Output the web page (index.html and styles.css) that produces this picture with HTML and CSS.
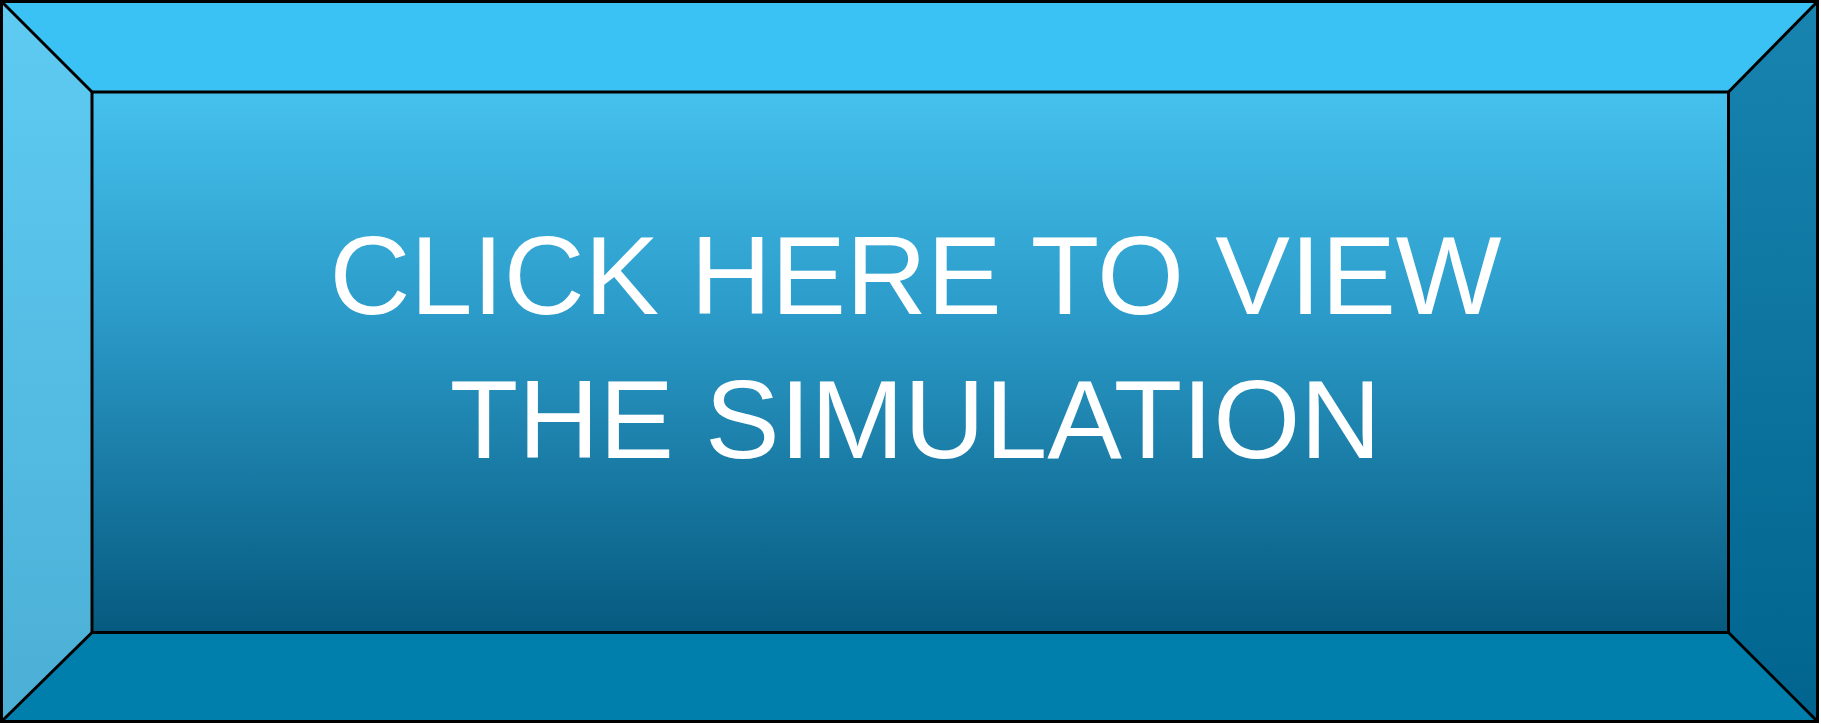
FILE: index.html
```html
<!DOCTYPE html>
<html lang="en">
<head>
<meta charset="utf-8">
<title>Click here to view the simulation</title>
<link rel="stylesheet" href="styles.css">
</head>
<body>
<div class="button">
  <svg class="bevel" width="1821" height="725" viewBox="0 0 1821 725" xmlns="http://www.w3.org/2000/svg">
    <defs>
      <linearGradient id="face" x1="0" y1="0" x2="0" y2="1">
        <stop offset="0" stop-color="#46C1ED"/>
        <stop offset="0.4" stop-color="#2C9CCA"/>
        <stop offset="1" stop-color="#065A7F"/>
      </linearGradient>
      <linearGradient id="left" x1="0" y1="0" x2="0" y2="1">
        <stop offset="0" stop-color="#5ECBF3"/>
        <stop offset="1" stop-color="#4CAFD5"/>
      </linearGradient>
      <linearGradient id="right" x1="0" y1="0" x2="0" y2="1">
        <stop offset="0" stop-color="#1884B0"/>
        <stop offset="1" stop-color="#00648E"/>
      </linearGradient>
    </defs>
    <polygon points="1.5,1.5 1817.5,1.5 1728.5,92 92,92" fill="#39C2F3"/>
    <polygon points="1.5,1.5 92,92 92,632.5 1.5,721.5" fill="url(#left)"/>
    <polygon points="1817.5,1.5 1817.5,721.5 1728.5,632.5 1728.5,92" fill="url(#right)"/>
    <polygon points="1.5,721.5 92,632.5 1728.5,632.5 1817.5,721.5" fill="#007FAD"/>
    <rect x="92" y="92" width="1636.5" height="540.5" fill="url(#face)"/>
    <g fill="none" stroke="#000" stroke-width="3">
      <rect x="1.5" y="1.5" width="1816" height="720"/>
      <rect x="92" y="92" width="1636.5" height="540.5"/>
      <line x1="1.5" y1="1.5" x2="92" y2="92"/>
      <line x1="1817.5" y1="1.5" x2="1728.5" y2="92"/>
      <line x1="1.5" y1="721.5" x2="92" y2="632.5"/>
      <line x1="1817.5" y1="721.5" x2="1728.5" y2="632.5"/>
    </g>
  </svg>
  <div class="label">
    <div class="line">CLICK HERE TO VIEW</div>
    <div class="line">THE SIMULATION</div>
  </div>
</div>
</body>
</html>
```
FILE: styles.css
```css
html, body {
  margin: 0;
  padding: 0;
  background: #ffffff;
}

.button {
  position: relative;
  width: 1821px;
  height: 725px;
  overflow: hidden;
}

.bevel {
  position: absolute;
  left: 0;
  top: 0;
  display: block;
}

.label {
  position: relative;
  padding-top: 204px;
  padding-left: 10px;
  font-family: "Liberation Sans", Arial, sans-serif;
  font-size: 112px;
  line-height: 144px;
  color: #ffffff;
  text-align: center;
  white-space: nowrap;
}
```
